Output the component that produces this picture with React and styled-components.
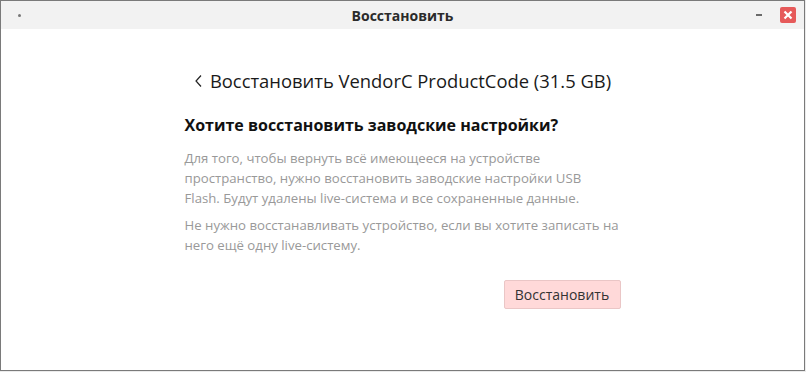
import React from 'react';
import styled, { createGlobalStyle } from 'styled-components';

const GlobalStyle = createGlobalStyle`
  html, body {
    margin: 0;
    padding: 0;
    background: #ebebeb;
  }
  body {
    font-family: "Open Sans", "Noto Sans", sans-serif;
  }
`;

const Window = styled.div`
  width: 805px;
  height: 371px;
  box-sizing: border-box;
  border: 1px solid #7a7a7a;
  background: #ffffff;
  display: flex;
  flex-direction: column;
`;

const TitleBar = styled.div`
  height: 28px;
  flex-shrink: 0;
  background: #f2f2f2;
  display: grid;
  grid-template-columns: 60px 1fr 60px;
  align-items: center;
`;

const MenuDot = styled.span`
  width: 3px;
  height: 3px;
  margin-left: 17px;
  border-radius: 50%;
  background: #777;
`;

const Title = styled.div`
  text-align: center;
  font-size: 14px;
  font-weight: 700;
  color: #2b2b2b;
`;

const Controls = styled.div`
  display: flex;
  align-items: center;
  justify-content: flex-end;
  gap: 18px;
  padding-right: 8px;
`;

const Minimize = styled.span`
  width: 6px;
  height: 2px;
  background: #6a6a6a;
`;

const Close = styled.span`
  width: 16px;
  height: 16px;
  border-radius: 2px;
  background: #e65a5a;
  display: flex;
  align-items: center;
  justify-content: center;
`;

const Content = styled.div`
  flex: 1;
  display: flex;
  flex-direction: column;
  align-items: center;
  padding-top: 39px;
`;

const Header = styled.div`
  display: flex;
  align-items: center;
  gap: 6px;
  font-size: 18.4px;
  color: #1a1a1a;
`;

const Panel = styled.div`
  width: 436px;
  margin-top: 21px;
  display: flex;
  flex-direction: column;
`;

const Question = styled.h2`
  margin: 0 0 12px;
  font-size: 16px;
  font-weight: 700;
  color: #111;
`;

const Paragraph = styled.p`
  margin: 0 0 7px;
  font-size: 13.2px;
  line-height: 20px;
  color: #999999;
`;

const Actions = styled.div`
  display: flex;
  justify-content: flex-end;
  margin-top: 18px;
`;

const Button = styled.button`
  font-family: inherit;
  font-size: 14px;
  color: #333;
  background: #ffd9d9;
  border: 1px solid #eac6c6;
  border-radius: 2px;
  width: 117px;
  height: 29px;
  padding: 0;
`;

export default function App() {
  return (
    <>
      <GlobalStyle />
      <Window>
        <TitleBar>
          <MenuDot />
          <Title>Восстановить</Title>
          <Controls>
            <Minimize />
            <Close>
              <svg width="10" height="10" viewBox="0 0 10 10">
                <path d="M1.5 1.5 L8.5 8.5 M8.5 1.5 L1.5 8.5" stroke="#fff" strokeWidth="2.2" />
              </svg>
            </Close>
          </Controls>
        </TitleBar>
        <Content>
          <Header>
            <svg width="10" height="14" viewBox="0 0 10 14">
              <path d="M7 1.5 L2 7 L7 12.5" stroke="#222" strokeWidth="1.2" fill="none" />
            </svg>
            <span>Восстановить VendorC ProductCode (31.5 GB)</span>
          </Header>
          <Panel>
            <Question>Хотите восстановить заводские настройки?</Question>
            <Paragraph>
              Для того, чтобы вернуть всё имеющееся на устройстве пространство, нужно восстановить заводские настройки USB
              <br />
              Flash. Будут удалены live-система и все сохраненные данные.
            </Paragraph>
            <Paragraph>
              Не нужно восстанавливать устройство, если вы хотите записать на него ещё одну live-систему.
            </Paragraph>
            <Actions>
              <Button>Восстановить</Button>
            </Actions>
          </Panel>
        </Content>
      </Window>
    </>
  );
}
